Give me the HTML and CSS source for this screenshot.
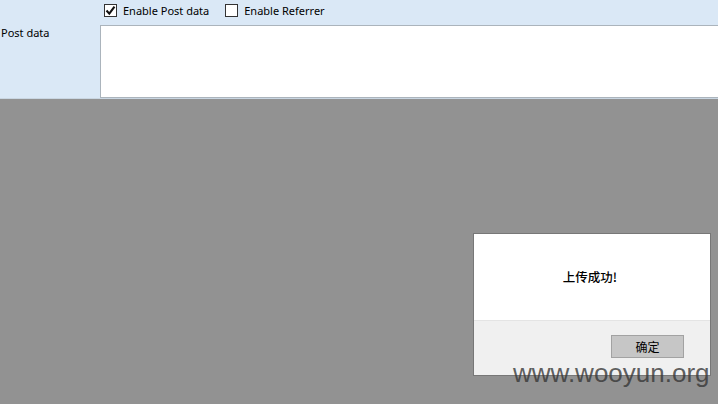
FILE: index.html
```html
<!DOCTYPE html>
<html>
<head>
<meta charset="utf-8">
<link rel="stylesheet" href="styles.css">
</head>
<body>
<div class="page">
  <div class="panel">
    <div class="opts">
      <label class="opt"><span class="box checked"><svg width="11" height="11" viewBox="0 0 11 11"><path d="M1.5 5.5 L4.3 8.6 L9.5 1.6" fill="none" stroke="#111" stroke-width="2.1"/></svg></span>Enable Post data</label>
      <label class="opt"><span class="box"></span>Enable Referrer</label>
    </div>
    <div class="row">
      <div class="lbl">Post data</div>
      <div class="area"></div>
    </div>
  </div>
  <div class="shade"></div>
  <div class="dialog">
    <div class="msg">上传成功!</div>
    <div class="foot"><button class="btn">确定</button></div>
  </div>
  <div class="wm">www.wooyun.org</div>
</div>
</body>
</html>
```
FILE: styles.css
```css
html, body { margin: 0; padding: 0; }
body { width: 718px; height: 404px; overflow: hidden; font-family: "Noto Sans", "Liberation Sans", sans-serif; }
.page { position: relative; width: 718px; height: 404px; display: flex; flex-direction: column; }
.panel { background: #dae8f6; height: 99px; border-bottom: 1px solid #c9d6e2; box-sizing: border-box; }
.opts { display: flex; padding-left: 104px; height: 21px; align-items: center; }
.opt { display: flex; align-items: center; font-size: 11px; color: #000; margin-right: 16px; }
.box { width: 11px; height: 11px; border: 1px solid #333; background: #fff; margin-right: 6px; display: flex; align-items: center; justify-content: center; }
.box svg { display: block; }
.row { display: flex; height: 73px; margin-top: 4px; }
.lbl { width: 100px; padding-left: 1px; font-size: 11px; color: #000; box-sizing: border-box; }
.area { flex: 1; background: #fff; border: 1px solid #abb4bc; border-right: none; box-sizing: border-box; }
.shade { flex: 1; background: #929292; }
.dialog { position: absolute; left: 473px; top: 233px; width: 238px; height: 143px; border: 1px solid #777; box-sizing: border-box; background: #fff; display: flex; flex-direction: column; }
.msg { height: 86px; display: flex; align-items: center; justify-content: center; font-family: "Noto Sans CJK SC", sans-serif; font-size: 12.5px; font-weight: 500; color: #000; padding-right: 4px; padding-bottom: 2px; box-sizing: border-box; }
.foot { flex: 1; background: #f0f0f0; border-top: 1px solid #e4e4e4; display: flex; justify-content: flex-end; align-items: flex-start; padding: 14px 26px 0 0; }
.btn { width: 73px; height: 23px; background: #c6c6c6; border: 1px solid #a2a2a2; font-family: "Noto Sans CJK SC", sans-serif; font-size: 12px; color: #000; padding: 0; }
.wm { position: absolute; left: 513px; top: 358px; font-family: "Liberation Sans", Arial, sans-serif; font-size: 26px; color: rgba(55,55,55,0.8); }
```
